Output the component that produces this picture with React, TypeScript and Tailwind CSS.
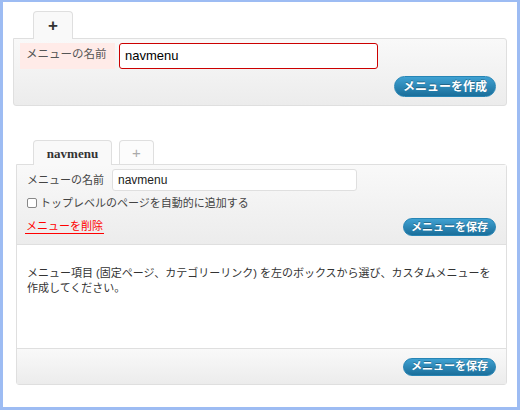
import React from "react";

const jp = "font-['Liberation_Sans','Noto_Sans_CJK_JP',sans-serif]";

function BlueButton({ label, big }: { label: string; big?: boolean }) {
  return (
    <div
      className={
        big
          ? "w-[102px] h-[21px] rounded-full border border-[#2785b5] bg-linear-to-b from-[#3fa1d2] to-[#1a6f9b] flex items-center justify-center text-white font-bold text-[12px] leading-[14px] [text-shadow:0_-1px_0_rgba(0,0,0,0.3)] font-['Liberation_Sans','Noto_Sans_CJK_JP',sans-serif]"
          : "w-[93px] h-[18px] rounded-full border border-[#2785b5] bg-linear-to-b from-[#3fa1d2] to-[#1a6f9b] flex items-center justify-center text-white font-bold text-[11px] leading-[13px] [text-shadow:0_-1px_0_rgba(0,0,0,0.3)] font-['Liberation_Sans','Noto_Sans_CJK_JP',sans-serif]"
      }
    >
      {label}
    </div>
  );
}

export default function App() {
  return (
    <div className="w-[520px] h-[410px] box-border bg-white border-solid border-[#9dbcf3] border-l-[3px] border-t-[2px] border-r-[3px] border-b-[3px] overflow-hidden">
      {/* Top: new menu */}
      <div className="pl-[10px] pt-[9px]">
        <div className="flex pl-[20px]">
          <div className="relative z-10 -mb-px w-[40px] h-[28px] bg-[#f9f9f9] border border-b-0 border-[#dfdfdf] rounded-t-[4px] flex items-center justify-center text-[17px] font-bold text-[#333] font-['Liberation_Sans',sans-serif] leading-none">
            +
          </div>
        </div>
        <div className="w-[494px] h-[68px] border border-[#dfdfdf] rounded-b-[3px] rounded-tr-[3px] bg-linear-to-b from-[#f9f9f9] to-[#ececec] px-[6px] pt-[4px] flex flex-col">
          <div className="flex gap-[4px]">
            <div className={`w-[95px] h-[26px] bg-[#ffebe8] pl-[6px] pt-[3px] text-[11.5px] leading-[16px] text-[#555] ${jp}`}>
              メニューの名前
            </div>
            <div className="w-[259px] h-[26px] border border-[#cc0000] rounded-[3px] bg-white pl-[5px] flex items-center text-[13px] text-black font-['Liberation_Sans',sans-serif]">
              navmenu
            </div>
          </div>
          <div className="flex justify-end mt-[7px] pr-[4px]">
            <BlueButton label="メニューを作成" big />
          </div>
        </div>
      </div>

      {/* Second: existing menu */}
      <div className="pl-[13px] pt-[34px]">
        <div className="flex items-start gap-[7px] pl-[17px]">
          <div className="relative z-10 -mb-px w-[79px] h-[25px] bg-[#f9f9f9] border border-b-0 border-[#dfdfdf] rounded-t-[4px] flex items-center justify-center text-[13px] font-bold text-[#333] font-['Liberation_Serif',serif] leading-none">
            navmenu
          </div>
          <div className="w-[35px] h-[24px] bg-[#fcfcfc] border border-b-0 border-[#dfdfdf] rounded-t-[4px] flex items-center justify-center text-[15px] text-[#aaa] font-['Liberation_Sans',sans-serif] leading-none">
            +
          </div>
        </div>
        <div className="w-[491px] border border-[#dfdfdf] rounded-b-[3px] rounded-tr-[3px] flex flex-col">
          {/* header */}
          <div className={`h-[80px] border-b border-[#dfdfdf] bg-linear-to-b from-[#f9f9f9] to-[#ececec] px-[10px] pt-[4px] ${jp}`}>
            <div className="flex items-center h-[22px]">
              <div className="w-[85px] text-[11px] leading-[14px] text-[#444]">メニューの名前</div>
              <div className="w-[245px] h-[22px] border border-[#dfdfdf] rounded-[3px] bg-white pl-[5px] flex items-center text-[12px] text-[#222] font-['Liberation_Sans',sans-serif]">
                navmenu
              </div>
            </div>
            <div className="flex items-center h-[16px] mt-[4px] gap-[3px]">
              <div className="w-[10px] h-[10px] border border-[#888] rounded-[2px] bg-white" />
              <div className="text-[11px] leading-[14px] text-[#444]">トップレベルのページを自動的に追加する</div>
            </div>
            <div className="flex items-center justify-between h-[18px] mt-[7px]">
              <div className="text-[11px] leading-[13px] text-[#ff0000] border-b border-[#ff0000] -ml-[2px] px-[1px]">
                メニューを削除
              </div>
              <BlueButton label="メニューを保存" />
            </div>
          </div>
          {/* body */}
          <div className={`h-[103px] bg-white px-[10px] pt-[21px] text-[11px] leading-[15px] text-[#333] ${jp}`}>
            メニュー項目 (固定ページ、カテゴリーリンク) を左のボックスから選び、カスタムメニューを
            <br />
            作成してください。
          </div>
          {/* footer */}
          <div className="h-[36px] border-t border-[#dfdfdf] bg-linear-to-b from-[#f9f9f9] to-[#ececec] px-[10px] flex items-center justify-end">
            <BlueButton label="メニューを保存" />
          </div>
        </div>
      </div>
    </div>
  );
}
